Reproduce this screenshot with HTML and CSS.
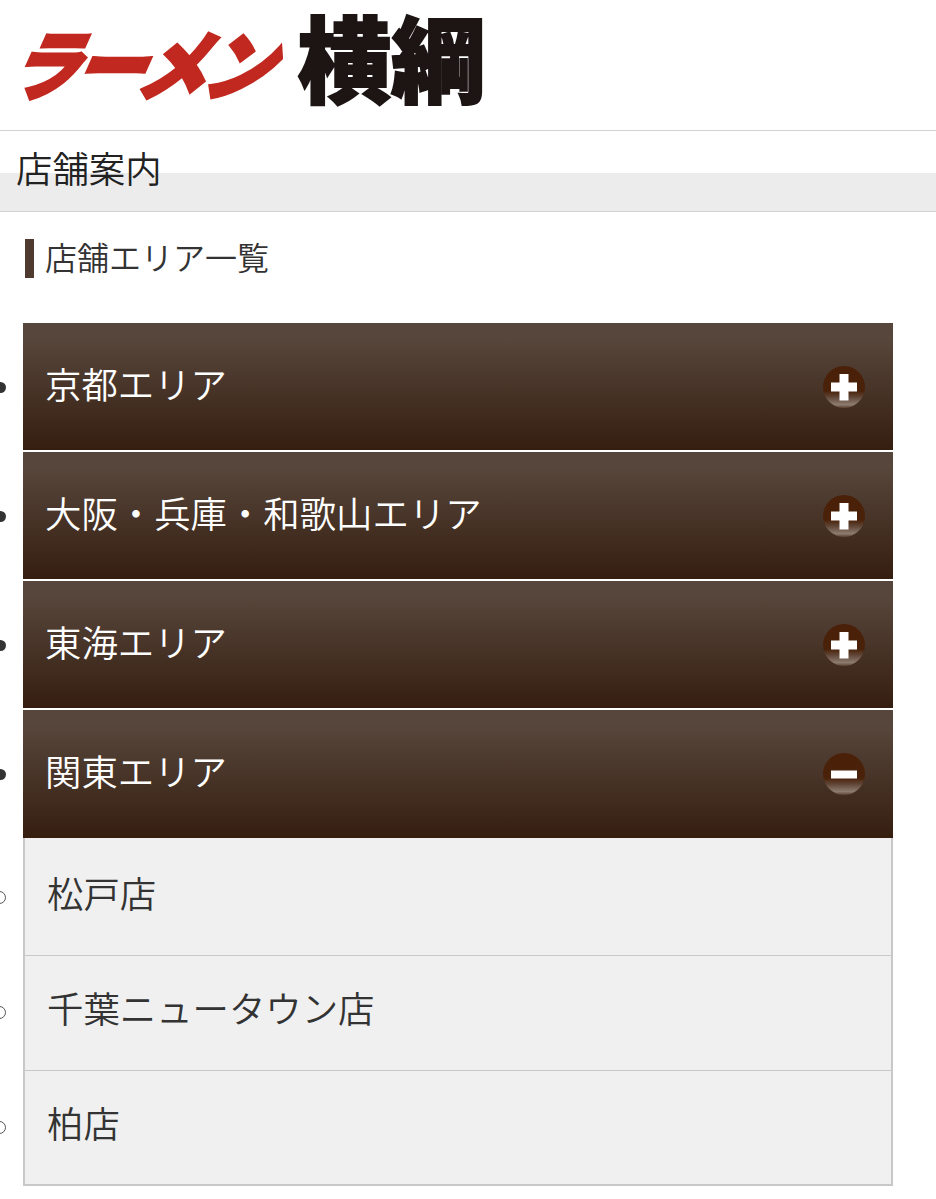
FILE: index.html
```html
<!DOCTYPE html>
<html lang="ja">
<head>
<meta charset="utf-8">
<title>店舗案内</title>
<link rel="stylesheet" href="styles.css">
</head>
<body>
<header class="site-header">
  <div class="logo"><span class="logo-red">ラーメン</span><span class="logo-black">横綱</span></div>
</header>
<h1 class="page-title">店舗案内</h1>
<h2 class="section-title"><span>店舗エリア一覧</span></h2>
<ul class="areas">
  <li class="area">
    <div class="area-head"><span>京都エリア</span>
      <svg class="toggle" viewBox="0 0 44 44"><defs><linearGradient id="g" x1="0" y1="0" x2="0" y2="1"><stop offset="0" stop-color="#4a2008"/><stop offset=".6" stop-color="#4a2209"/><stop offset=".74" stop-color="#604536"/><stop offset=".92" stop-color="#8d7c6f"/><stop offset="1" stop-color="#5a4030"/></linearGradient></defs><circle cx="22" cy="22" r="21" fill="url(#g)"/><path fill="#fff" d="M17.500 9h9v8.500h8.500v9h-8.500v9h-9v-9h-8.500v-9h8.500z"/></svg>
    </div>
  </li>
  <li class="area">
    <div class="area-head"><span>大阪・兵庫・和歌山エリア</span>
      <svg class="toggle" viewBox="0 0 44 44"><circle cx="22" cy="22" r="21" fill="url(#g)"/><path fill="#fff" d="M17.500 9h9v8.500h8.500v9h-8.500v9h-9v-9h-8.500v-9h8.500z"/></svg>
    </div>
  </li>
  <li class="area">
    <div class="area-head"><span>東海エリア</span>
      <svg class="toggle" viewBox="0 0 44 44"><circle cx="22" cy="22" r="21" fill="url(#g)"/><path fill="#fff" d="M17.500 9h9v8.500h8.500v9h-8.500v9h-9v-9h-8.500v-9h8.500z"/></svg>
    </div>
  </li>
  <li class="area">
    <div class="area-head"><span>関東エリア</span>
      <svg class="toggle" viewBox="0 0 44 44"><circle cx="22" cy="22" r="21" fill="url(#g)"/><rect x="9" y="18.500" width="26" height="8" fill="#fff"/></svg>
    </div>
    <ul class="shops">
      <li class="shop">松戸店</li>
      <li class="shop">千葉ニュータウン店</li>
      <li class="shop">柏店</li>
    </ul>
  </li>
</ul>
</body>
</html>
```
FILE: styles.css
```css
* { box-sizing: border-box; }
html, body { margin: 0; padding: 0; background: #fff; }
body {
  font-family: "Noto Sans CJK JP", "Noto Sans", sans-serif;
  color: #333;
  overflow-x: hidden;
}
.site-header {
  height: 131px;
  border-bottom: 1px solid #d2d2d2;
  display: flex;
  align-items: center;
  padding-left: 23px;
}
.logo { display: flex; align-items: center; white-space: nowrap; }
.logo-red {
  display: block;
  width: 260px;
  font-size: 70px;
  font-weight: 900;
  line-height: 1.2;
  letter-spacing: -4.500px;
  color: #c1281f;
  -webkit-text-stroke: 3px #c1281f;
  transform: translate(-3px, -3px) skewX(-24deg) scaleY(1.08);
  transform-origin: center;
}
.logo-black {
  display: block;
  margin-left: 14px;
  font-size: 94px;
  font-weight: 900;
  line-height: 1.1;
  color: #1c1514;
  -webkit-text-stroke: 2px #1c1514;
  transform: translateY(-9px);
}
.page-title {
  margin: 0;
  height: 81px;
  padding: 16px 0 0 16px;
  font-size: 36.4px;
  font-weight: 350;
  line-height: 40px;
  color: #222;
  background: linear-gradient(#fff 42px, #ececec 42px);
  border-bottom: 1px solid #d2d2d2;
}
.section-title {
  margin: 27px 0 0 25px;
  height: 39px;
  border-left: 9px solid #4e3a2f;
  padding-left: 11px;
  font-size: 32px;
  font-weight: 350;
  line-height: 35px;
  color: #333;
}
.areas {
  margin: 45px 0 0;
  padding: 0 43px 0 23px;
  list-style: none;
}
.area { position: relative; color: #333; }
.area::before {
  content: "";
  position: absolute;
  left: -28px;
  top: 59px;
  width: 11px;
  height: 11px;
  border-radius: 50%;
  background: #333;
}
.area-head {
  height: 127px;
  margin-bottom: 2px;
  padding: 0 27px 0 22px;
  display: flex;
  align-items: center;
  justify-content: space-between;
  font-size: 36.4px;
  font-weight: 350;
  line-height: 1.2;
  color: #fff;
  background: linear-gradient(#57463b 0%, #57463b 12%, #351e10 100%);
}
.area-head span { position: relative; top: -3px; }
.toggle { width: 44px; height: 44px; flex: none; filter: blur(.6px); }
.area:last-child .area-head { margin-bottom: 0; height: 128px; }
.shops {
  margin: 0;
  padding: 0;
  list-style: none;
}
.shop {
  position: relative;
  height: 116px;
  margin-top: -1px;
  padding-left: 22px;
  font-size: 36.4px;
  font-weight: 350;
  line-height: 102px;
  color: #333;
  background: #f0f0f0;
  border: 2px solid #c8c8c8;
  border-top-width: 1px;
  border-bottom-width: 1px;
}
.shop::before {
  content: "";
  position: absolute;
  left: -32px;
  top: 50px;
  width: 11px;
  height: 11px;
  border: 1px solid #555;
  border-radius: 50%;
  background: #fff;
}
.shop:first-child { height: 118px; border-top: 0; margin-top: 0; line-height: 108px; }
.shop:first-child::before { top: 53px; }
.shop:last-child { border-bottom-width: 2px; }
```
